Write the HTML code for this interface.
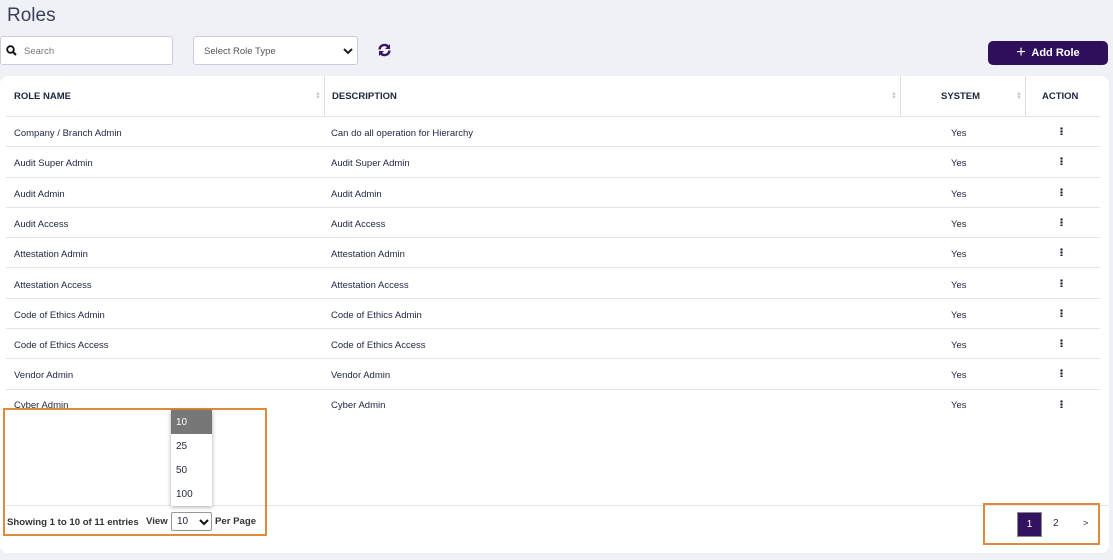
<!DOCTYPE html>
<html><head><style>
*{box-sizing:border-box;margin:0;padding:0}
body{width:1113px;height:560px;background:#f0f1f6;font-family:"Liberation Sans",sans-serif;color:#1e2640;position:relative;overflow:hidden}
.abs{position:absolute}
.title{left:7px;top:5px;font-size:19px;color:#3a3f5c}
.search{left:0;top:36px;width:173px;height:29px;background:#fff;border:1px solid #ccd;border-radius:3px}
.search span{position:absolute;left:23px;top:9px;font-size:9.5px;color:#777}
.sel{left:193px;top:36px;width:165px;height:29px;background:#fff;border:1px solid #ccd;border-radius:3px}
.sel span{position:absolute;left:10px;top:9px;font-size:9.5px;color:#555}
.btn{left:988px;top:41px;width:120px;height:24px;background:#2f0f5c;border-radius:5px;color:#fff;font-weight:bold;font-size:11px;text-align:center;line-height:24px}
.card{left:0;top:76px;width:1109px;height:477px;background:#fff;border-radius:8px}
.th{position:absolute;top:1px;height:40px;line-height:40px;font-size:9.5px;font-weight:bold}
.row{position:absolute;left:6px;width:1094px;height:30.3px;border-bottom:1px solid #e4e4ec;font-size:9.5px}
.row div{position:absolute;top:11px}
.vl{position:absolute;top:0;width:1px;height:40px;background:#ddd}
.sort{position:absolute;top:16px;font-size:6px;color:#ccc;line-height:4px}
.dots{width:3px;height:8px;top:10px!important;background:radial-gradient(circle,#1e2640 1.2px,transparent 1.3px) 0 0/3px 3px repeat-y}
</style></head><body>
<div class="abs title">Roles</div>
<div class="abs search"><svg class="abs" style="left:5px;top:8px" width="11" height="11" viewBox="0 0 11 11"><circle cx="4.5" cy="4.5" r="3.3" fill="none" stroke="#111" stroke-width="1.8"/><path d="M7 7l3 3" stroke="#111" stroke-width="2"/></svg><span>Search</span></div>
<div class="abs sel"><span>Select Role Type</span><svg class="abs" style="left:149px;top:10px" width="10" height="8" viewBox="0 0 10 8"><path d="M1 2l4 4 4-4" fill="none" stroke="#222" stroke-width="2"/></svg></div>
<svg class="abs" style="left:377px;top:43px" width="15" height="14" viewBox="0 0 15 14"><path d="M2.5 6.5A5 5 0 0 1 11.5 4" fill="none" stroke="#3b1466" stroke-width="2.4"/><path d="M13 1v5h-5z" fill="#3b1466"/><path d="M12.5 7.5A5 5 0 0 1 3.5 10" fill="none" stroke="#3b1466" stroke-width="2.4"/><path d="M2 13V8h5z" fill="#3b1466"/></svg>
<div class="abs btn"><span style="font-size:16px;font-weight:normal;vertical-align:-1px">+</span>&nbsp; Add Role</div>
<div class="abs card">
 <div class="abs" style="left:6px;top:40px;width:1094px;height:1px;background:#e4e4ec"></div>
 <div class="th" style="left:14px">ROLE NAME</div>
 <div class="th" style="left:332px">DESCRIPTION</div>
 <div class="th" style="left:941px">SYSTEM</div>
 <div class="th" style="left:1042px">ACTION</div>
 <div class="vl" style="left:324px"></div><div class="vl" style="left:900px"></div><div class="vl" style="left:1025px"></div>
 <div class="sort" style="left:315px">▲<br>▼</div><div class="sort" style="left:891px">▲<br>▼</div><div class="sort" style="left:1016px">▲<br>▼</div>
 <div class="row" style="top:41px"><div style="left:8px">Company / Branch Admin</div><div style="left:325px">Can do all operation for Hierarchy</div><div style="left:945px">Yes</div><div class="dots" style="left:1054px"></div></div>
 <div class="row" style="top:71.3px"><div style="left:8px">Audit Super Admin</div><div style="left:325px">Audit Super Admin</div><div style="left:945px">Yes</div><div class="dots" style="left:1054px"></div></div>
 <div class="row" style="top:101.6px"><div style="left:8px">Audit Admin</div><div style="left:325px">Audit Admin</div><div style="left:945px">Yes</div><div class="dots" style="left:1054px"></div></div>
 <div class="row" style="top:131.9px"><div style="left:8px">Audit Access</div><div style="left:325px">Audit Access</div><div style="left:945px">Yes</div><div class="dots" style="left:1054px"></div></div>
 <div class="row" style="top:162.2px"><div style="left:8px">Attestation Admin</div><div style="left:325px">Attestation Admin</div><div style="left:945px">Yes</div><div class="dots" style="left:1054px"></div></div>
 <div class="row" style="top:192.5px"><div style="left:8px">Attestation Access</div><div style="left:325px">Attestation Access</div><div style="left:945px">Yes</div><div class="dots" style="left:1054px"></div></div>
 <div class="row" style="top:222.8px"><div style="left:8px">Code of Ethics Admin</div><div style="left:325px">Code of Ethics Admin</div><div style="left:945px">Yes</div><div class="dots" style="left:1054px"></div></div>
 <div class="row" style="top:253.1px"><div style="left:8px">Code of Ethics Access</div><div style="left:325px">Code of Ethics Access</div><div style="left:945px">Yes</div><div class="dots" style="left:1054px"></div></div>
 <div class="row" style="top:283.4px"><div style="left:8px">Vendor Admin</div><div style="left:325px">Vendor Admin</div><div style="left:945px">Yes</div><div class="dots" style="left:1054px"></div></div>
 <div class="row" style="top:313.7px;border:0"><div style="left:8px;top:10px">Cyber Admin</div><div style="left:325px;top:10px">Cyber Admin</div><div style="left:945px;top:10px">Yes</div><div class="dots" style="left:1054px"></div></div>
 <div class="abs" style="left:6px;top:429px;width:1103px;height:1px;background:#e4e4ec"></div>
</div>
<div class="abs" style="left:3px;top:408px;width:264px;height:128px;border:2px solid #e08a3c"></div>
<div class="abs" style="left:7px;top:517px;font-size:9.6px;font-weight:bold;color:#333">Showing 1 to 10 of 11 entries</div>
<div class="abs" style="left:146px;top:516px;font-size:9.6px;font-weight:bold;color:#333">View</div>
<div class="abs" style="left:171px;top:512px;width:41px;height:19px;border:1px solid #999;border-radius:2px;background:#fff;font-size:10px;padding:3px 5px">10<svg class="abs" style="left:27px;top:5px" width="10" height="8" viewBox="0 0 10 8"><path d="M1 2l4 4 4-4" fill="none" stroke="#111" stroke-width="2"/></svg></div>
<div class="abs" style="left:215px;top:516px;font-size:9.6px;font-weight:bold;color:#333">Per Page</div>
<div class="abs" style="left:171px;top:410px;width:41px;height:96px;background:#fff;box-shadow:0 1px 4px rgba(0,0,0,.35);font-size:10px">
 <div style="height:24px;background:#777;color:#fff;padding:7px 5px">10</div>
 <div style="height:24px;padding:7px 5px">25</div>
 <div style="height:24px;padding:7px 5px">50</div>
 <div style="height:24px;padding:7px 5px">100</div>
</div>
<div class="abs" style="left:983px;top:503px;width:117px;height:42px;border:2px solid #e08a3c"></div>
<div class="abs" style="left:1017px;top:512px;width:25px;height:25px;background:#33125f;border:1px solid #888;color:#fff;font-size:10px;text-align:center;line-height:23px">1</div>
<div class="abs" style="left:1053px;top:518px;font-size:10px">2</div>
<div class="abs" style="left:1083px;top:518px;font-size:9px">&gt;</div>
</body></html>
